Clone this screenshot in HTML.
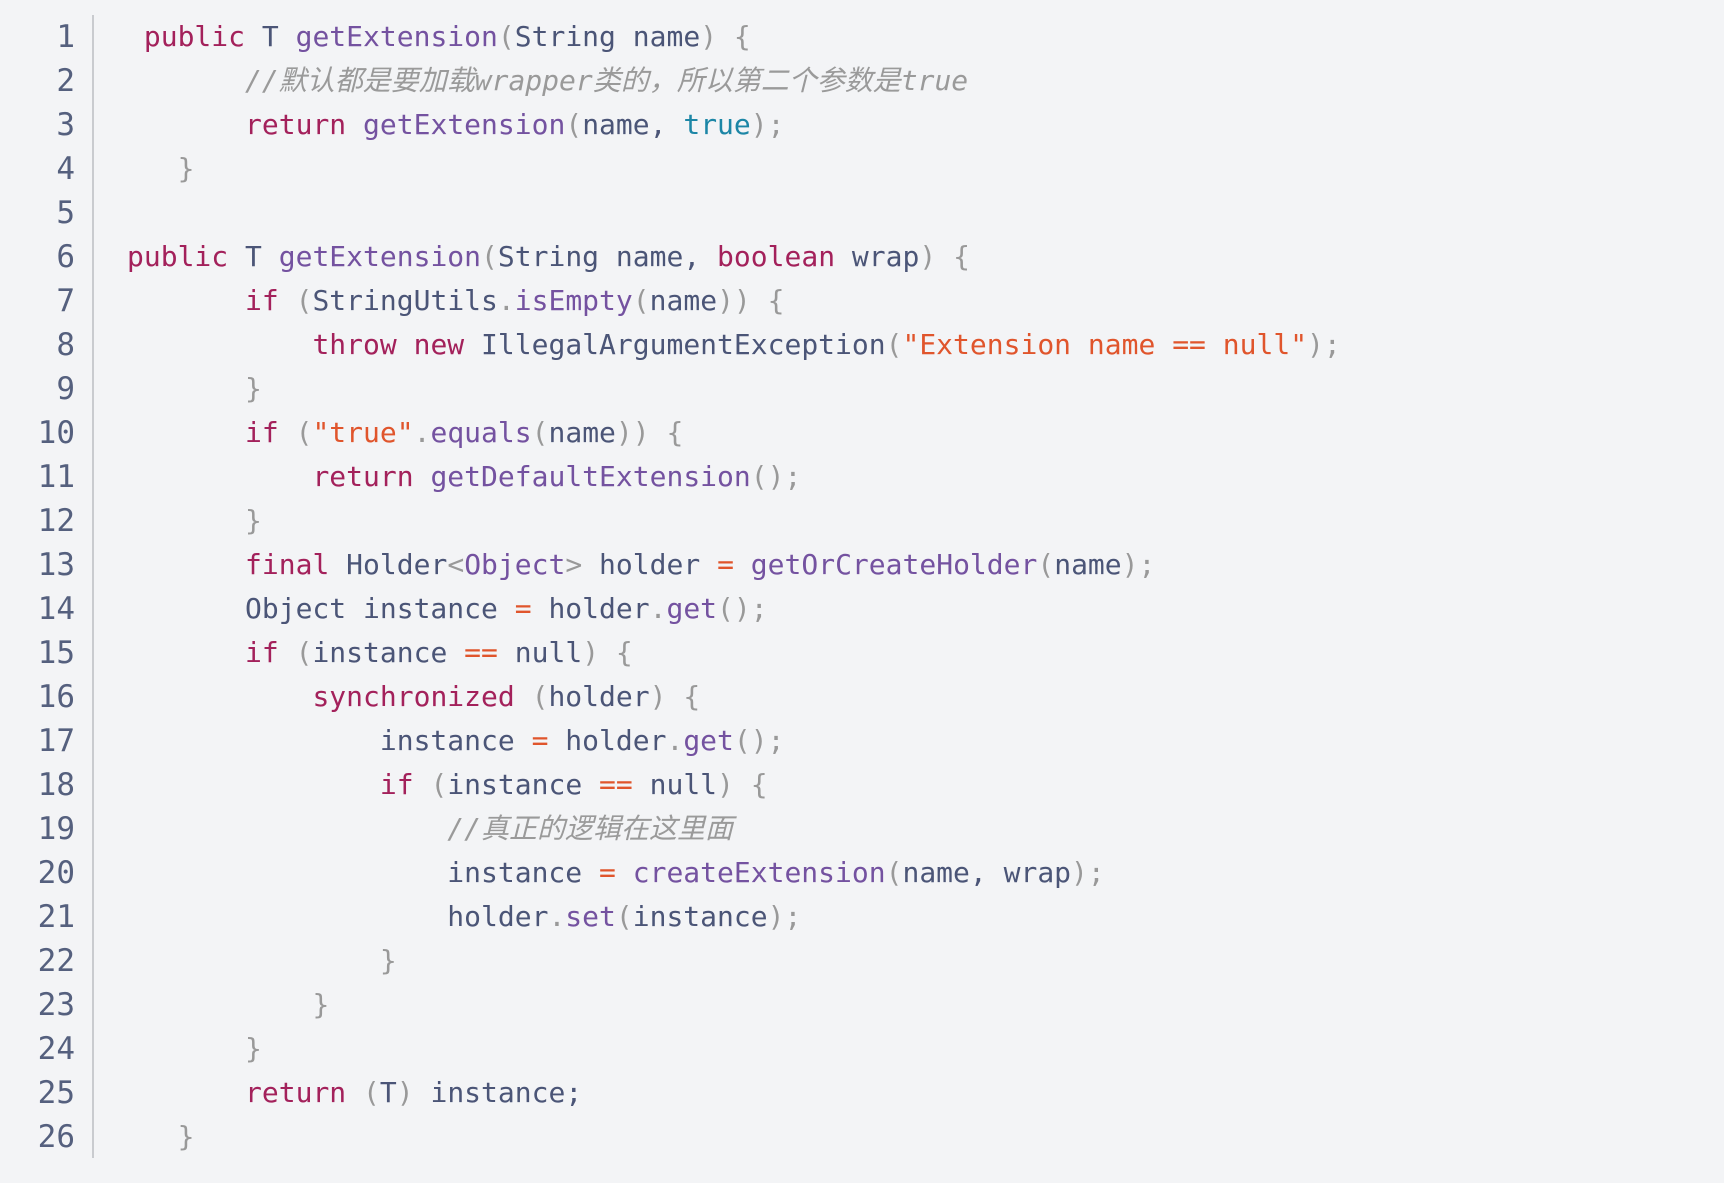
<!DOCTYPE html>
<html><head><meta charset="utf-8"><style>
html,body{margin:0;padding:0;background:#fff;}
#w{position:absolute;left:0;top:0;width:1724px;height:1183px;background:#f3f4f6;}
#bar{position:absolute;left:92px;top:15px;width:2px;height:1143px;background:#c9cbcf;}
pre{margin:0;position:absolute;top:15px;font-family:"DejaVu Sans Mono","Liberation Mono","Noto Sans CJK SC",monospace;font-size:28px;line-height:44px;}
#ln{left:0;width:75px;text-align:right;color:#55607e;font-size:31px;}
#code{left:127px;color:#4b5577;}
.k{color:#a3215b}.f{color:#7452a0}.p{color:#999}.s{color:#e0552c}.b{color:#1c86a6}
.c{color:#9a9a9a;font-style:italic;font-family:"DejaVu Sans Mono","Noto Sans CJK SC",monospace}
</style></head><body><div id="w">
<div id="bar"></div>
<pre id="ln">1
2
3
4
5
6
7
8
9
10
11
12
13
14
15
16
17
18
19
20
21
22
23
24
25
26</pre>
<pre id="code"> <span class="k">public</span> T <span class="f">getExtension</span><span class="p">(</span>String name<span class="p">) {</span>
       <span class="c">//默认都是要加载wrapper类的，所以第二个参数是true</span>
       <span class="k">return</span> <span class="f">getExtension</span><span class="p">(</span>name, <span class="b">true</span><span class="p">);</span>
   <span class="p">}</span>

<span class="k">public</span> T <span class="f">getExtension</span><span class="p">(</span>String name, <span class="k">boolean</span> wrap<span class="p">) {</span>
       <span class="k">if</span> <span class="p">(</span>StringUtils<span class="p">.</span><span class="f">isEmpty</span><span class="p">(</span>name<span class="p">)) {</span>
           <span class="k">throw</span> <span class="k">new</span> IllegalArgumentException<span class="p">(</span><span class="s">"Extension name == null"</span><span class="p">);</span>
       <span class="p">}</span>
       <span class="k">if</span> <span class="p">(</span><span class="s">"true"</span><span class="p">.</span><span class="f">equals</span><span class="p">(</span>name<span class="p">)) {</span>
           <span class="k">return</span> <span class="f">getDefaultExtension</span><span class="p">();</span>
       <span class="p">}</span>
       <span class="k">final</span> Holder<span class="p">&lt;</span><span class="f">Object</span><span class="p">&gt;</span> holder <span class="s">=</span> <span class="f">getOrCreateHolder</span><span class="p">(</span>name<span class="p">);</span>
       Object instance <span class="s">=</span> holder<span class="p">.</span><span class="f">get</span><span class="p">();</span>
       <span class="k">if</span> <span class="p">(</span>instance <span class="s">==</span> null<span class="p">) {</span>
           <span class="k">synchronized</span> <span class="p">(</span>holder<span class="p">) {</span>
               instance <span class="s">=</span> holder<span class="p">.</span><span class="f">get</span><span class="p">();</span>
               <span class="k">if</span> <span class="p">(</span>instance <span class="s">==</span> null<span class="p">) {</span>
                   <span class="c">//真正的逻辑在这里面</span>
                   instance <span class="s">=</span> <span class="f">createExtension</span><span class="p">(</span>name, wrap<span class="p">);</span>
                   holder<span class="p">.</span><span class="f">set</span><span class="p">(</span>instance<span class="p">);</span>
               <span class="p">}</span>
           <span class="p">}</span>
       <span class="p">}</span>
       <span class="k">return</span> <span class="p">(</span>T<span class="p">)</span> instance;
   <span class="p">}</span></pre>
</div></body></html>
